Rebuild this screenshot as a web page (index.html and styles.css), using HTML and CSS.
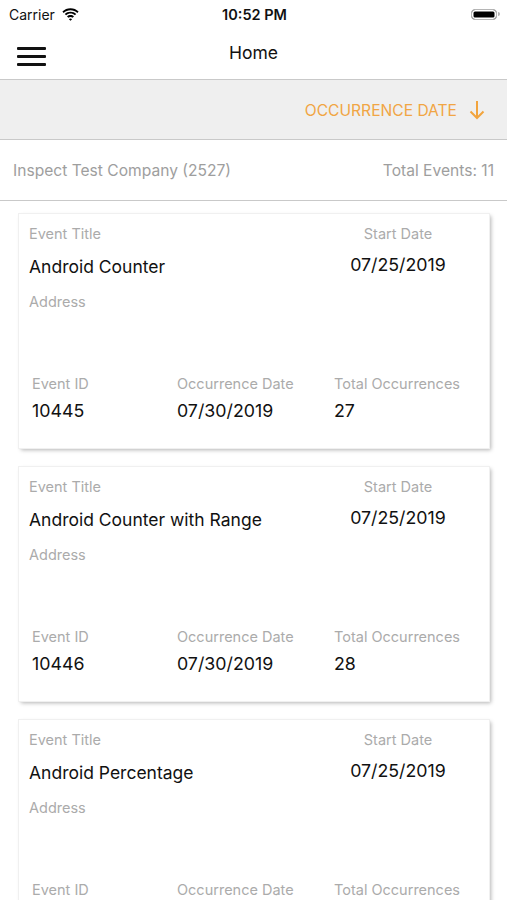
FILE: index.html
```html
<!DOCTYPE html>
<html>
	<head>
		<meta http-equiv="Content-Type" content="text/html; charset=UTF-8" />
		<title>Home</title>
		<link rel="stylesheet" href="styles.css">
	</head>

	<body>
		<div class="status">
			<div class="carrier">
				Carrier
				<svg class="wifi" width="17" height="13" viewBox="0 0 17 13">
					<path d="M8.5 2.2c2.6 0 5 1 6.8 2.7l1.3-1.4C14.5 1.4 11.6.2 8.5.2S2.5 1.4.4 3.5l1.3 1.4C3.5 3.2 5.9 2.2 8.5 2.2z" fill="#000"/>
					<path d="M8.5 5.6c1.7 0 3.2.6 4.4 1.7l1.3-1.4C12.7 4.5 10.7 3.7 8.5 3.7S4.3 4.5 2.8 5.9l1.3 1.4c1.2-1.1 2.7-1.7 4.4-1.7z" fill="#000"/>
					<path d="M8.5 9c.8 0 1.5.3 2 .8L12 8.4C11 7.5 9.8 7 8.5 7S6 7.5 5 8.4l1.5 1.4c.5-.5 1.2-.8 2-.8zM8.5 12.8l1.6-1.6c-.4-.4-1-.7-1.6-.7s-1.2.3-1.6.7z" fill="#000"/>
				</svg>
			</div>
			<div class="time">10:52 PM</div>
			<div class="battery"><span class="level"></span><span class="nub"></span></div>
		</div>

		<div class="navbar">
			<div class="menu"><span></span><span></span><span></span></div>
			<div class="title">Home</div>
		</div>

		<div class="sortbar">
			<span>OCCURRENCE DATE</span>
			<svg width="16" height="20" viewBox="0 0 16 20">
				<path d="M8 1v17M1.5 11.5L8 18l6.5-6.5" fill="none" stroke="#f2a43d" stroke-width="2"/>
			</svg>
		</div>

		<div class="company">
			<span>Inspect Test Company (2527)</span>
			<span>Total Events: 11</span>
		</div>

		<div class="list">
			<div class="card">
				<div class="top">
					<div class="main">
						<div class="label">Event Title</div>
						<div class="name">Android Counter</div>
						<div class="label addr">Address</div>
					</div>
					<div class="start">
						<div class="label">Start Date</div>
						<div class="date">07/25/2019</div>
					</div>
				</div>
				<div class="stats">
					<div><div class="label">Event ID</div><div class="value">10445</div></div>
					<div><div class="label">Occurrence Date</div><div class="value">07/30/2019</div></div>
					<div><div class="label">Total Occurrences</div><div class="value">27</div></div>
				</div>
			</div>

			<div class="card">
				<div class="top">
					<div class="main">
						<div class="label">Event Title</div>
						<div class="name">Android Counter with Range</div>
						<div class="label addr">Address</div>
					</div>
					<div class="start">
						<div class="label">Start Date</div>
						<div class="date">07/25/2019</div>
					</div>
				</div>
				<div class="stats">
					<div><div class="label">Event ID</div><div class="value">10446</div></div>
					<div><div class="label">Occurrence Date</div><div class="value">07/30/2019</div></div>
					<div><div class="label">Total Occurrences</div><div class="value">28</div></div>
				</div>
			</div>

			<div class="card">
				<div class="top">
					<div class="main">
						<div class="label">Event Title</div>
						<div class="name">Android Percentage</div>
						<div class="label addr">Address</div>
					</div>
					<div class="start">
						<div class="label">Start Date</div>
						<div class="date">07/25/2019</div>
					</div>
				</div>
				<div class="stats">
					<div><div class="label">Event ID</div><div class="value">10447</div></div>
					<div><div class="label">Occurrence Date</div><div class="value">07/30/2019</div></div>
					<div><div class="label">Total Occurrences</div><div class="value">29</div></div>
				</div>
			</div>
		</div>
	</body>
</html>
```

FILE: styles.css
```css
html {
	background-color: #fff;
}

body {
	font-family: Inter, Roboto, "Liberation Sans", sans-serif;
	margin: 0;
	color: #111;
	overflow: hidden;
	height: 900px;
}

div.status {
	align-items: center;
	display: flex;
	height: 28px;
	justify-content: space-between;
	padding: 0 7px 0 9px;
	font-size: 14px;
}
div.carrier {
	align-items: center;
	display: flex;
	gap: 7px;
	width: 120px;
}
div.time {
	font-weight: 600;
	font-size: 14.5px;
}
div.battery {
	align-items: center;
	display: flex;
	justify-content: flex-end;
	width: 120px;
}
div.battery .level {
	border: 1.5px solid #b5b5b5;
	border-radius: 4px;
	box-shadow: inset 0 0 0 1.5px #fff;
	background-color: #000;
	height: 9px;
	width: 24px;
}
div.battery .nub {
	background-color: #b5b5b5;
	border-radius: 0 2px 2px 0;
	height: 4px;
	margin-left: 1px;
	width: 2px;
}

div.navbar {
	align-items: center;
	border-bottom: 1px solid #c9c9c9;
	display: flex;
	height: 51px;
	position: relative;
}
div.menu {
	display: flex;
	flex-direction: column;
	gap: 5px;
	margin-left: 17px;
	margin-top: 5px;
}
div.menu span {
	background-color: #111;
	border-radius: 1px;
	height: 3px;
	width: 29px;
}
div.navbar .title {
	font-size: 17.5px;
	left: 0;
	position: absolute;
	right: 0;
	text-align: center;
	top: 14px;
}

div.sortbar {
	align-items: center;
	background-color: #efefef;
	border-bottom: 1px solid #c9c9c9;
	color: #f1a544;
	display: flex;
	font-size: 15.6px;
	gap: 12px;
	height: 58px;
	justify-content: flex-end;
	padding-right: 22px;
	padding-top: 1px;
}

div.company {
	align-items: center;
	border-bottom: 1px solid #c9c9c9;
	color: #9e9e9e;
	display: flex;
	font-size: 15.6px;
	height: 60px;
	justify-content: space-between;
	padding: 0 13px 0 13px;
}

div.list {
	padding-top: 13px;
}
div.card {
	box-shadow: 1px 1px 1px #ddd, 2px 2px 4px rgba(0, 0, 0, 0.3);
	box-sizing: border-box;
	height: 234px;
	margin: 0 18px 19px 19px;
	outline: 1px solid #f0f0f0;
	padding-top: 11px;
}
div.top {
	display: flex;
}
div.main {
	flex: 1;
	padding-left: 10px;
}
div.start {
	margin-right: 31px;
	text-align: center;
	width: 120px;
}
.label {
	color: #ababab;
	font-size: 14.5px;
	line-height: 18px;
}
.name {
	font-size: 17.5px;
	line-height: 22px;
	margin-top: 13px;
}
.addr {
	margin-top: 15px;
}
.date {
	font-size: 17.8px;
	line-height: 22px;
	margin-top: 11px;
}
div.stats {
	display: grid;
	grid-template-columns: 145px 157px 1fr;
	margin-top: 64px;
	padding-left: 13px;
}
.value {
	font-size: 17.8px;
	line-height: 22px;
	margin-top: 7px;
}
```
